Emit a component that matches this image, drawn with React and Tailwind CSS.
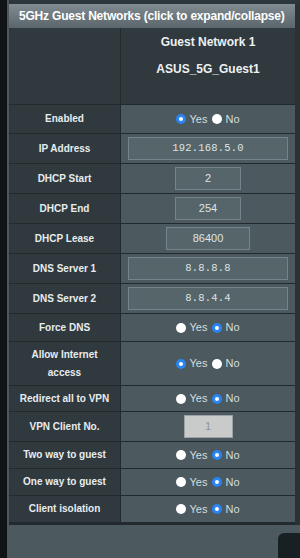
import React from 'react'

const font = { fontFamily: '"Liberation Sans", Arial, sans-serif' }

function Radio ({ on }) {
  return on
    ? <span className="inline-block w-[10px] h-[10px] rounded-full bg-white border-[3px] border-[#2a84f2] box-border" />
    : <span className="inline-block w-[10px] h-[10px] rounded-full bg-white" />
}

function YesNo ({ yes }) {
  return (
    <div className="flex items-center justify-center gap-[3px] text-[11px] text-[#d6dcde]">
      <Radio on={yes} /><span className="mr-[2px]">Yes</span>
      <Radio on={!yes} /><span>No</span>
    </div>
  )
}

function Field ({ value, w, mono }) {
  return (
    <div className={`${w} h-[23px] mx-auto flex items-center justify-center bg-[#566569] border border-[#75838a] text-[#dfe4e6] ${mono ? 'text-[10.5px] font-[Liberation_Mono,monospace] tracking-[0.2px]' : 'text-[11px]'}`}>
      {value}
    </div>
  )
}

function Row ({ label, h, children }) {
  return (
    <div className={`flex ${h} border-b border-[#222a2e]`}>
      <div className="w-[112px] shrink-0 flex items-center justify-center text-center px-[2px] bg-[#2f393e] border-r border-[#222a2e] text-[10px] font-bold text-[#e8ecee] leading-[18px]">
        {label}
      </div>
      <div className="flex-1 flex items-center justify-center bg-[#4c5a60]">
        {children}
      </div>
    </div>
  )
}

export default function App () {
  let rows = [
    ['Enabled', 'h-[29px]', <YesNo yes />],
    ['IP Address', 'h-[30px]', <div className="w-full px-[7px]"><Field value="192.168.5.0" w="w-[160px]" mono /></div>],
    ['DHCP Start', 'h-[30px]', <Field value="2" w="w-[66px]" />],
    ['DHCP End', 'h-[30px]', <Field value="254" w="w-[66px]" />],
    ['DHCP Lease', 'h-[30px]', <Field value="86400" w="w-[84px]" />],
    ['DNS Server 1', 'h-[30px]', <div className="w-full px-[7px]"><Field value="8.8.8.8" w="w-[160px]" mono /></div>],
    ['DNS Server 2', 'h-[30px]', <div className="w-full px-[7px]"><Field value="8.8.4.4" w="w-[160px]" mono /></div>],
    ['Force DNS', 'h-[28px]', <YesNo />],
    [<>Allow Internet<br />access</>, 'h-[44px]', <YesNo yes />],
    ['Redirect all to VPN', 'h-[26px]', <YesNo />],
    ['VPN Client No.', 'h-[30px]', <div className="w-[49px] h-[23px] flex items-center justify-center bg-[#c9cbcb] border border-[#9da3a5] text-[11px] text-[#8f9496]">1</div>],
    ['Two way to guest', 'h-[27px]', <YesNo />],
    ['One way to guest', 'h-[27px]', <YesNo />],
    ['Client isolation', 'h-[27px]', <YesNo />]
  ]
  return (
    <div className="w-[300px] h-[558px] overflow-hidden flex bg-[#2a3236]" style={font}>
      <div className="w-[7px] shrink-0 bg-[#101416]" />
      <div className="w-[2px] shrink-0 bg-[#4e585c]" />
      <div className="flex-1 flex flex-col">
        <div className="h-[4px] bg-[#2d373b]" />
        <div className="flex">
          <div className="w-[286px] shrink-0 flex flex-col">
            <div className="h-[24px] flex items-center pl-[10px] whitespace-nowrap bg-gradient-to-b from-[#808c91] to-[#5a666b] text-[12px] tracking-[-0.2px] font-bold text-white">
              5GHz Guest Networks (click to expand/collapse)
            </div>
            <div className="flex h-[77px] border-b border-[#222a2e]">
              <div className="w-[112px] shrink-0 bg-[#2f393e] border-r border-[#222a2e]" />
              <div className="flex-1 bg-[#2f393e] flex flex-col items-center pt-[5px] gap-[9px] text-[12px] leading-[18px] font-bold text-[#eef1f2]">
                <span>Guest Network 1</span>
                <span>ASUS_5G_Guest1</span>
              </div>
            </div>
            {rows.map(([label, h, c], i) => <Row key={i} label={label} h={h}>{c}</Row>)}
            <div className="h-[2px] bg-[#222a2e]" />
          </div>
          <div className="flex-1 bg-[#2a3236]" />
        </div>
        <div className="flex-1 bg-[#4c5a60] flex justify-end items-end">
          <div className="w-[22px] h-[25px] rounded-tl-[6px] bg-[#182023]" />
        </div>
      </div>
    </div>
  )
}
